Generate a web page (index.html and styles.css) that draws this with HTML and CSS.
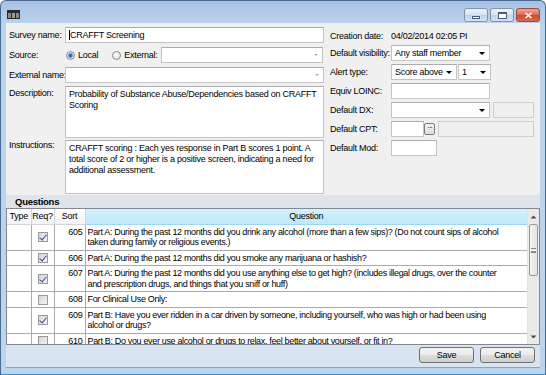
FILE: index.html
```
<!DOCTYPE html>
<html>
<head>
<meta charset="utf-8">
<title>Survey</title>
<link rel="stylesheet" href="styles.css">
</head>
<body>
<div class="window">
  <div class="titlebar">
    <svg class="appicon" width="13" height="9" viewBox="0 0 13 9">
      <rect x="0" y="0" width="13" height="9" fill="#2a2a2a"/>
      <rect x="1" y="3" width="3" height="5" fill="#8a8a8a"/>
      <rect x="5" y="3" width="3" height="5" fill="#9a9a9a"/>
      <rect x="9" y="3" width="3" height="5" fill="#8a8a8a"/>
    </svg>
    <div class="caps">
      <div class="cap"><span class="minbar"></span></div>
      <div class="cap"><span class="maxbox"></span></div>
      <div class="cap close">
        <svg width="9" height="7" viewBox="0 0 9 7"><path d="M1.5 1 L7.5 6 M7.5 1 L1.5 6" stroke="#ffffff" stroke-width="1.6"/></svg>
      </div>
    </div>
  </div>
  <div class="client">
    <div class="form">
      <div class="lcol">
        <div class="row r1"><span class="lbl">Survey name:</span><div class="box wide"><span class="caret"></span>CRAFFT Screening</div></div>
        <div class="row r2"><span class="lbl">Source:</span><span class="radio on"></span><span class="rlabel">Local</span><span class="radio"></span><span class="rlabel">External:</span><div class="box ext"><i class="arr light"></i></div></div>
        <div class="row r3"><span class="lbl">External name:</span><div class="box wide"><i class="arr light"></i></div></div>
        <div class="row area r4"><span class="lbl lt">Description:</span><div class="box ta desc">Probability of Substance Abuse/Dependencies based on CRAFFT<br>Scoring</div></div>
        <div class="row area r5"><span class="lbl">Instructions:</span><div class="box ta instr">CRAFFT scoring : Each yes response in Part B scores 1 point. A<br>total score of 2 or higher is a positive screen, indicating a need for<br>additional assessment.</div></div>
      </div>
      <div class="rcol">
        <div class="rrow"><span class="rlbl">Creation date:</span><span class="val">04/02/2014 02:05 PI</span></div>
        <div class="rrow"><span class="rlbl">Default visibility:</span><div class="box sel w99">Any staff member<i class="arr"></i></div></div>
        <div class="rrow"><span class="rlbl">Alert type:</span><div class="box sel w65">Score above<i class="arr"></i></div><div class="box sel w33">1<i class="arr"></i></div></div>
        <div class="rrow"><span class="rlbl">Equiv LOINC:</span><div class="box w99"></div></div>
        <div class="rrow"><span class="rlbl">Default DX:</span><div class="box sel w99"><i class="arr"></i></div><div class="box dis w41"></div></div>
        <div class="rrow"><span class="rlbl">Default CPT:</span><div class="box w33"></div><div class="dots">&middot;&middot;&middot;</div><div class="box dis w96"></div></div>
        <div class="rrow"><span class="rlbl">Default Mod:</span><div class="box w46"></div></div>
      </div>
    </div>
    <div class="qband">Questions</div>
    <div class="grid">
      <div class="tablewrap">
        <table class="qt">
          <colgroup><col class="c1"><col class="c2"><col class="c3"><col class="c4"></colgroup>
          <thead>
            <tr><th>Type</th><th>Req?</th><th>Sort</th><th class="qh">Question</th></tr>
          </thead>
          <tbody>
            <tr><td></td><td class="ck"><span class="cb on"></span></td><td class="num">605</td><td class="q">Part A: During the past 12 months did you drink any alcohol (more than a few sips)? (Do not count sips of alcohol<br>taken during family or religious events.)</td></tr>
            <tr><td></td><td class="ck"><span class="cb on"></span></td><td class="num">606</td><td class="q">Part A: During the past 12 months did you smoke any marijuana or hashish?</td></tr>
            <tr><td></td><td class="ck"><span class="cb on"></span></td><td class="num">607</td><td class="q">Part A: During the past 12 months did you use anything else to get high? (includes illegal drugs, over the counter<br>and prescription drugs, and things that you sniff or huff)</td></tr>
            <tr><td></td><td class="ck"><span class="cb"></span></td><td class="num">608</td><td class="q">For Clinical Use Only:</td></tr>
            <tr><td></td><td class="ck"><span class="cb on"></span></td><td class="num">609</td><td class="q">Part B: Have you ever ridden in a car driven by someone, including yourself, who was high or had been using<br>alcohol or drugs?</td></tr>
            <tr><td></td><td class="ck"><span class="cb"></span></td><td class="num">610</td><td class="q">Part B: Do you ever use alcohol or drugs to relax, feel better about yourself, or fit in?</td></tr>
          </tbody>
        </table>
      </div>
      <div class="vscroll">
        <div class="sbtn"><svg width="7" height="4" viewBox="0 0 7 4"><path d="M0.5 3.5 L3.5 0.5 L6.5 3.5" fill="#4d4d4d"/></svg></div>
        <div class="thumb"><span class="grip"></span></div>
        <div class="track"></div>
        <div class="sbtn"><svg width="7" height="4" viewBox="0 0 7 4"><path d="M0.5 0.5 L3.5 3.5 L6.5 0.5" fill="#4d4d4d"/></svg></div>
      </div>
    </div>
    <div class="footer">
      <div class="btn">Save</div>
      <div class="btn">Cancel</div>
    </div>
  </div>
</div>
</body>
</html>
```
FILE: styles.css
```
* { box-sizing: border-box; }
html, body { margin: 0; padding: 0; }
body {
  width: 546px; height: 375px; overflow: hidden;
  font-family: "Liberation Sans", Arial, sans-serif;
  font-size: 9px; letter-spacing: -0.25px; color: #000;
  background: #fff;
}
.window {
  width: 546px; height: 375px;
  display: flex; flex-direction: column;
  background: linear-gradient(#a6c2e4, #bcd3ec 24px, #bed4ed);
  border: 1px solid #4b6a90;
  border-bottom-color: #3a8fc8;
  border-radius: 6px 6px 0 0;
  padding: 0 5px 6px 5px;
}
.titlebar {
  height: 22px; flex: none;
  display: flex; align-items: center;
}
.appicon { margin-left: 1px; margin-top: 4px; }
.caps { margin-left: auto; display: flex; gap: 2px; margin-top: 6px; margin-right: 0; }
.cap {
  width: 24px; height: 14px;
  border: 1px solid #7e93b0; border-radius: 3px;
  background: linear-gradient(#eef3f9, #d6e2f0 50%, #c3d4e9 51%, #d3e2f2);
  display: flex; align-items: center; justify-content: center;
}
.cap.close {
  border-color: #9b4a3e;
  background-color: #d05a44;
  background-image: linear-gradient(#eea596, #dd6c57 48%, #cc4a32 52%, #d96a50);
}
.minbar { width: 8px; height: 3px; background: #fff; border: 1px solid #4a5d78; margin-top: 4px; }
.maxbox { width: 9px; height: 7px; border: 1px solid #4a5d78; border-top-width: 2px; background: #fff; }
.client {
  flex: 1; display: flex; flex-direction: column;
  background: #f0f0f0;
}
.form { height: 172px; flex: none; display: flex; }
.lcol { width: 318px; padding: 4px 0 0 3px; display: flex; flex-direction: column; }
.row { display: flex; align-items: center; height: 16px; }
.r2 { margin-top: 4px; }
.r3 { margin-top: 4px; }
.r4 { margin-top: 3px; height: 52px; }
.r5 { margin-top: 2px; height: 54px; }
.row.area { align-items: flex-start; }
.lbl { width: 56px; flex: none; white-space: nowrap; }
.lbl.lt { padding-top: 2px; }
.box {
  height: 16px; background: #fff;
  border: 1px solid #c4c4c4; border-top-color: #abadb3;
  display: flex; align-items: center;
  padding: 0 3px; white-space: nowrap; overflow: hidden;
}
.wide { width: 259px; }
.caret { width: 1px; height: 10px; background: #000; margin-right: 0; }
.radio {
  width: 9px; height: 9px; border-radius: 50%; flex: none;
  border: 1px solid #8a8a8a;
  background: radial-gradient(circle at 40% 35%, #ffffff, #d8d8d8);
  margin-left: 1px; margin-right: 3px;
}
.radio.on {
  background: radial-gradient(circle, #2b5fa8 0, #3d7bd0 1.8px, #c9dcef 2.6px, #eef2f6 4px);
}
.radio + .rlabel { margin-right: 13px; }
.rlabel:last-of-type { margin-right: 3px; }
.ext { width: 162px; }
.arr {
  margin-left: auto; width: 0; height: 0; flex: none;
  border-left: 3px solid transparent; border-right: 3px solid transparent;
  border-top: 3px solid #000;
}
.arr.light { border-left-width: 2px; border-right-width: 2px; border-top: 2px solid #a8a8a8; margin-right: 1px; }
.ta { height: 100%; align-items: flex-start; display: block; padding: 2px 3px; line-height: 11px; width: 259px; }
.rcol { width: 216px; padding: 3px 0 0 6px; display: flex; flex-direction: column; gap: 3px; }
.rrow { display: flex; align-items: center; height: 16px; }
.rrow:first-child { padding-top: 3px; }
.rlbl { width: 61px; flex: none; white-space: nowrap; }
.val { white-space: nowrap; }
.sel { padding-right: 4px; }
.w99 { width: 99px; }
.w65 { width: 66px; }
.w33 { width: 33px; }
.w41 { width: 41px; margin-left: 3px; }
.w96 { width: 96px; margin-left: 3px; }
.w46 { width: 46px; }
.w65 + .w33 { margin-left: 1px; }
.dis { background: #f0f0f0; border-color: #cfcfcf; }
.dots {
  width: 11px; height: 12px; margin-left: 0;
  border: 1px solid #7a7a7a; border-radius: 2px;
  background: linear-gradient(#f4f4f4, #dedede);
  font-size: 8px; line-height: 8px; text-align: center; letter-spacing: -1px;
}
.qband {
  height: 13px; flex: none;
  background: #dfe4ea;
  font-weight: bold; font-size: 9.5px; line-height: 13px;
  padding-left: 9px;
}
.grid {
  height: 137px; flex: none;
  border: 1px solid #828790;
  background: #fff;
  display: flex; overflow: hidden;
}
.tablewrap { flex: 1; overflow: hidden; }
.qt { border-collapse: collapse; table-layout: fixed; width: 520px; }
.c1 { width: 24px; } .c2 { width: 23px; } .c3 { width: 31px; } .c4 { width: 442px; }
.qt th {
  height: 15px; font-weight: normal; padding: 0;
  background: linear-gradient(#ffffff, #f1f2f4);
  border-right: 1px solid #d5d5d5; border-bottom: 1px solid #d5d5d5;
  text-align: center; line-height: 14px;
}
.qt th.qh { background: linear-gradient(#d2f1fc, #bfe8f9); border-color: #96d9f9; border-right: none; }
.qt td {
  border-right: 1px solid #aaa; border-bottom: 1px solid #aaa;
  padding: 2px 2px; line-height: 10.5px; vertical-align: top;
  white-space: nowrap; overflow: hidden;
}
.qt td.q { border-right: none; letter-spacing: -0.34px; }
.qt td.num { text-align: right; }
.qt td.ck { vertical-align: middle; text-align: center; padding: 0; }
.cb {
  display: inline-block; width: 10px; height: 10px; vertical-align: middle;
  border: 1px solid #9a9a9a;
  background: linear-gradient(135deg, #d6d6d6, #f4f4f4);
  position: relative;
}
.cb.on::after {
  content: ""; position: absolute; left: 2px; top: 0px;
  width: 3px; height: 6px;
  border-right: 1.5px solid #2e4f92; border-bottom: 1.5px solid #2e4f92;
  transform: rotate(40deg);
}
.vscroll { width: 12px; flex: none; display: flex; flex-direction: column; background: #eaeaea; border-left: 1px solid #e3e3e3; }
.sbtn { height: 15px; display: flex; align-items: center; justify-content: center; flex: none; }
.thumb {
  height: 52px; flex: none; margin: 0 1px;
  border: 1px solid #9a9a9a; border-radius: 2px;
  background: linear-gradient(90deg, #f3f3f3, #e2e2e2);
  display: flex; align-items: center; justify-content: center;
}
.grip { width: 5px; height: 5px; border-top: 1px solid #888; border-bottom: 1px solid #888; background: linear-gradient(#fff 0 1px, #888 1px 2px, transparent 2px); background-position: 0 1px; background-repeat: no-repeat; }
.track { flex: 1; }
.footer {
  flex: 1; background: #d8e4f2;
  border-bottom: 1px solid #a0a0a0;
  display: flex; justify-content: flex-end; align-items: flex-start;
  padding: 2px 5px 0 0; gap: 6px;
}
.btn {
  width: 55px; height: 16px;
  border: 1px solid #707070; border-radius: 3px;
  background: linear-gradient(#f2f2f2, #ebebeb 50%, #dddddd 51%, #cfcfcf);
  display: flex; align-items: center; justify-content: center;
}
```
